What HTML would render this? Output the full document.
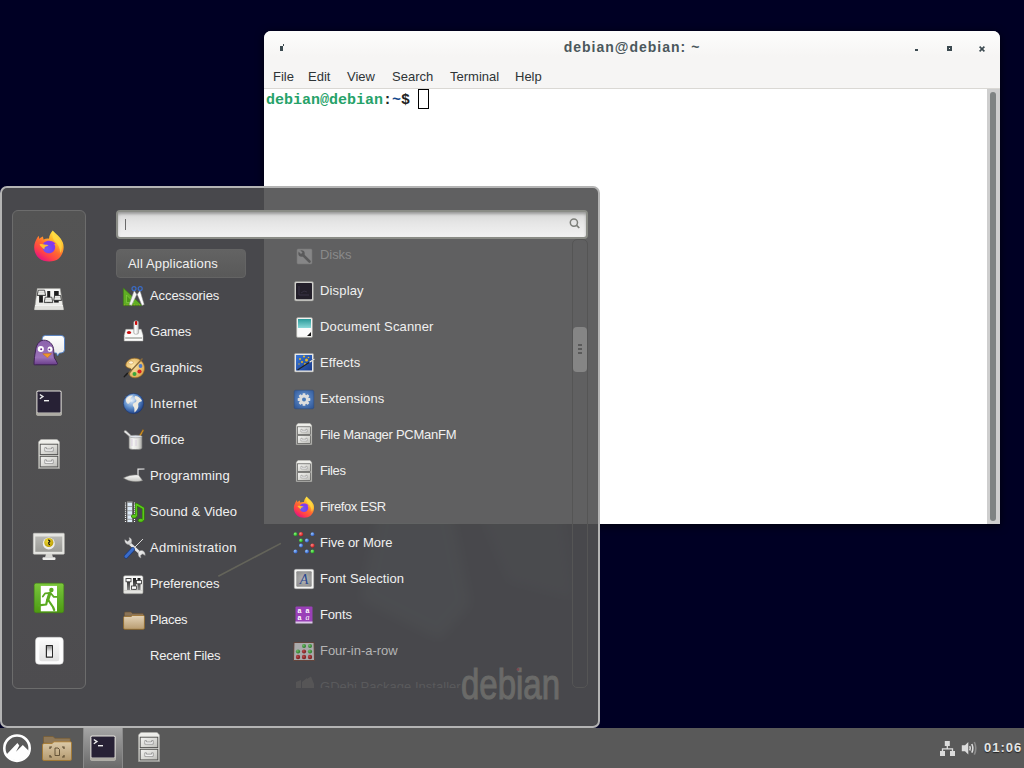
<!DOCTYPE html>
<html><head><meta charset="utf-8">
<style>
*{margin:0;padding:0;box-sizing:border-box}
html,body{width:1024px;height:768px;overflow:hidden;background:#000024;font-family:"Liberation Sans",sans-serif;position:relative}
.a{position:absolute}
svg.a{overflow:visible}
/* terminal */
#term{left:264px;top:31px;width:736px;height:493px;background:#fff;border-radius:7px 7px 0 0;overflow:hidden;box-shadow:0 2px 8px rgba(0,0,0,0.7)}
#tb{left:0;top:0;width:736px;height:58px;background:linear-gradient(#fdfdfc,#f6f5f4 45%,#f6f5f4);border-bottom:1px solid #dad8d4}
#ttitle{left:0;width:736px;top:8px;text-align:center;font-weight:bold;font-size:14px;letter-spacing:1px;color:#4b585c}
.mi{top:38px;font-size:13px;color:#2e3436}
#prompt{left:2px;top:60px;font-family:"Liberation Mono",monospace;font-weight:bold;font-size:15px;line-height:20px;white-space:pre}
#cur{left:154px;top:58px;width:11px;height:20px;border:1.5px solid #000}
#trough{left:723px;top:58px;width:13px;height:435px;background:#cecece}
#thumb{left:726px;top:61px;width:6px;height:429px;background:#7f8383;border-radius:3px}
/* menu */
#menu{left:0;top:186px;width:600px;height:542px;background:rgba(80,79,81,0.905);border:2px solid #b4b4b4;border-radius:7px}
#fav{left:12px;top:210px;width:74px;height:479px;background:linear-gradient(#545454,#4d4c4f);border:1px solid #6c6c6c;border-radius:6px}
#search{left:116px;top:210px;width:472px;height:29px;border:2px solid #8a8c86;border-radius:4px;background:linear-gradient(#c4c4c4,#dcdcdc 4px,#e6e6e6 45%,#f2f2f2);box-shadow:inset 0 2px 3px rgba(0,0,0,0.22)}
#allapps{left:116px;top:249px;width:130px;height:29px;background:linear-gradient(#636363,#595959);border:1px solid #646464;border-radius:4px}
.t{font-size:13px;color:#f0f0f0;white-space:nowrap}
#sbtrough{left:572px;top:239px;width:16px;height:449px;border:1px solid #555;border-radius:5px}
#sbthumb{left:573px;top:327px;width:14px;height:45px;background:#858585;border-radius:4px}
/* panel */
#panel{left:0;top:728px;width:1024px;height:40px;background:#595959}
#tbtn{left:83px;top:728px;width:40px;height:40px;background:linear-gradient(#a4a4a4,#6a6a6a);border-left:1px solid #8a8a8a;border-right:1px solid #8a8a8a}
#clock{left:984px;top:740px;font-size:13px;font-weight:bold;letter-spacing:1px;color:#e4e4e4;text-shadow:0 1px 1px #222}
</style></head><body>

<svg width="0" height="0" style="position:absolute">
<defs>
<linearGradient id="ffbody" x1="0.85" y1="0.05" x2="0.25" y2="0.95"><stop offset="0" stop-color="#fff44f"/><stop offset="0.3" stop-color="#ffb72c"/><stop offset="0.55" stop-color="#ff6a30"/><stop offset="0.8" stop-color="#ff3e4a"/><stop offset="1" stop-color="#e5157f"/></linearGradient>
<radialGradient id="ffpurp" cx="0.35" cy="0.65" r="0.8"><stop offset="0" stop-color="#6e5cf0"/><stop offset="0.6" stop-color="#7a3df0"/><stop offset="1" stop-color="#9a32e8"/></radialGradient>
<symbol id="ff" viewBox="0 0 32 32">
<path d="M19.8 0.6C22.5 4 27.5 6.8 29.8 12.5C31.6 17.5 30.5 24.5 25.5 28.8C21 32.5 11 32.6 6 28.3C1.3 24.2 0.2 17.5 2 12.6C2.9 10 4 7.8 5.7 5.7L6.4 9C7.4 7.8 8.6 7.1 9.9 6.6L10.6 9.6C12.3 8.7 14.2 8.4 16 8.7C16.2 5.5 17.8 2.8 19.8 0.6Z" fill="url(#ffbody)"/>
<path d="M19.5 2.5C21.5 6 26 8 28 13C29.5 17 28.8 21 27.2 23C27 18 25 14 22 11.5C20 9.8 18.8 6 19.5 2.5Z" fill="#ffe44a" opacity="0.6"/>
<path d="M9.5 17C9.5 13 12.5 10.8 16 10.8C18.5 10.8 20 11.5 21.2 12.5L22.5 13.5C22 14.2 21.3 14 21 14C22 15 22.2 16 22.2 17C22.2 20.6 19.5 23.3 15.9 23.3C12.3 23.3 9.5 20.6 9.5 17Z" fill="url(#ffpurp)"/>
<path d="M6.5 14.5C8 13.8 10 14.2 11.5 14.5C13 14.8 14.5 14.8 15.5 15.5C14.5 16 13 16.2 12 17C11.5 17.5 11.3 18.5 11.5 19.5C10 18.5 8.5 17 7.5 16Z" fill="#ffbd2e"/>
</symbol>
<linearGradient id="cabg" x1="0" y1="0" x2="0" y2="1"><stop offset="0" stop-color="#f2f2ee"/><stop offset="1" stop-color="#c6c6c2"/></linearGradient>
<linearGradient id="drwg" x1="0" y1="0" x2="1" y2="1"><stop offset="0" stop-color="#f4f4f2"/><stop offset="0.5" stop-color="#dcdcd8"/><stop offset="1" stop-color="#bdbdb9"/></linearGradient>
<symbol id="cab" viewBox="0 0 22 30">
<path d="M3 0.3H19L21.7 3V29.7H0.3V3Z" fill="url(#cabg)" stroke="#8c8c88" stroke-width="0.6"/>
<rect x="2.2" y="5.2" width="17.6" height="10.4" fill="url(#drwg)" stroke="#4c4c4a" stroke-width="0.9"/>
<rect x="2.2" y="17.3" width="17.6" height="10.6" fill="url(#drwg)" stroke="#4c4c4a" stroke-width="0.9"/>
<path d="M6.8 8.6H8.4V10H13.6V8.6H15.2V12.2H6.8Z" fill="#fbfbfb" stroke="#707070" stroke-width="0.6"/>
<path d="M6.8 20.8H8.4V22.2H13.6V20.8H15.2V24.4H6.8Z" fill="#fbfbfb" stroke="#707070" stroke-width="0.6"/>
</symbol>
<symbol id="trm" viewBox="0 0 26 26">
<rect x="0.4" y="0.4" width="25.2" height="25.2" rx="1.6" fill="#e9e7e1"/>
<rect x="0.4" y="22.6" width="25.2" height="3" rx="1" fill="#aeaca4"/>
<rect x="1.4" y="1.4" width="23.2" height="21.2" rx="0.8" fill="#272135"/>
<path d="M3.8 4.5L7 6.6L3.8 8.7" fill="none" stroke="#f0f0f0" stroke-width="1.3"/>
<rect x="8" y="10" width="5" height="1.4" fill="#f0f0f0"/>
</symbol>
</defs>
</svg>

<div id="term" class="a">
  <div id="tb" class="a"></div>
  <div id="ttitle" class="a">debian@debian: ~</div>
  <div class="a mi" style="left:9px">File</div>
  <div class="a mi" style="left:44px">Edit</div>
  <div class="a mi" style="left:83px">View</div>
  <div class="a mi" style="left:128px">Search</div>
  <div class="a mi" style="left:186px">Terminal</div>
  <div class="a mi" style="left:251px">Help</div>
  <div id="prompt" class="a"><span style="color:#26a269">debian@debian</span><span style="color:#222">:</span><span style="color:#12488b">~</span><span style="color:#222">$ </span></div>
  <div id="cur" class="a"></div>
  <div id="trough" class="a"></div>
  <div id="thumb" class="a"></div>
  <div class="a" style="left:16px;top:15px;width:3px;height:5px;background:#3c4a50"></div>
  <div class="a" style="left:19px;top:13px;width:1px;height:2px;background:#3c4a50"></div>
  <div class="a" style="left:651px;top:18px;width:3px;height:2px;background:#3c4a50"></div>
  <div class="a" style="left:683px;top:15px;width:5px;height:5px;border:2px solid #3c4a50"></div>
  <svg class="a" style="left:715px;top:15px" width="6" height="6" viewBox="0 0 6 6"><path d="M0.6 0.6L5.4 5.4M5.4 0.6L0.6 5.4" stroke="#3c4a50" stroke-width="1.6"/></svg>
</div>

<div id="menu" class="a"></div>
<svg class="a" style="left:0;top:186px" width="600" height="542" viewBox="0 186 600 542">
<defs><filter id="bl" x="-50%" y="-50%" width="200%" height="200%"><feGaussianBlur stdDeviation="6"/></filter><clipPath id="wc"><rect x="264" y="523" width="308" height="170"/></clipPath></defs>
<g clip-path="url(#wc)"><path d="M380 500L449.6 500L471 604L440 640L360 600Z" fill="#7a8a84" opacity="0.07" filter="url(#bl)"/>
<path d="M473 500L560 500L575 600L507.6 582Z" fill="#7a8a84" opacity="0.045" filter="url(#bl)"/></g>
<path d="M218.3 576.2L280.9 543.4" stroke="#64645a" stroke-width="1.6"/>
<text x="461" y="699" font-family="Liberation Sans" font-size="42" fill="#6a6a68" stroke="#6a6a68" stroke-width="1.1" transform="translate(461 0) scale(0.785 1) translate(-461 0)">debian</text>
<circle cx="518" cy="669.5" r="1.4" fill="#7a4a50"/>
</svg>
<div id="fav" class="a"></div>
<div id="search" class="a"></div>
<div class="a" style="left:125px;top:219px;width:1px;height:11px;background:#6a6a6a"></div>
<svg class="a" style="left:567px;top:216px" width="14" height="14" viewBox="0 0 14 14"><circle cx="6.9" cy="6.6" r="3.6" fill="none" stroke="#7d7f7a" stroke-width="1.5"/><path d="M9.6 9.3L12.3 12" stroke="#7d7f7a" stroke-width="1.7"/></svg>
<div id="allapps" class="a"></div>
<div class="a t" style="left:128px;top:256px;letter-spacing:0.16px;">All Applications</div>

<div class="a t" style="left:150px;top:288px;letter-spacing:-0.08px;">Accessories</div>
<div class="a t" style="left:150px;top:324px;letter-spacing:-0.14px;">Games</div>
<div class="a t" style="left:150px;top:360px;letter-spacing:0.03px;">Graphics</div>
<div class="a t" style="left:150px;top:396px;letter-spacing:0.41px;">Internet</div>
<div class="a t" style="left:150px;top:432px;letter-spacing:0.16px;">Office</div>
<div class="a t" style="left:150px;top:468px;letter-spacing:0.16px;">Programming</div>
<div class="a t" style="left:150px;top:504px;letter-spacing:0.05px;">Sound &amp; Video</div>
<div class="a t" style="left:150px;top:540px;letter-spacing:0.32px;">Administration</div>
<div class="a t" style="left:150px;top:576px;letter-spacing:-0.06px;">Preferences</div>
<div class="a t" style="left:150px;top:612px;letter-spacing:-0.29px;">Places</div>
<div class="a t" style="left:150px;top:648px;letter-spacing:-0.15px;">Recent Files</div>

<div class="a t" style="left:320px;top:247px;color:#8a8a8a;letter-spacing:-0.06px;">Disks</div>
<div class="a t" style="left:320px;top:283px;letter-spacing:0.16px;">Display</div>
<div class="a t" style="left:320px;top:319px;letter-spacing:0.14px;">Document Scanner</div>
<div class="a t" style="left:320px;top:355px;letter-spacing:0.11px;">Effects</div>
<div class="a t" style="left:320px;top:391px;letter-spacing:0.07px;">Extensions</div>
<div class="a t" style="left:320px;top:427px;letter-spacing:-0.27px;">File Manager PCManFM</div>
<div class="a t" style="left:320px;top:463px;letter-spacing:-0.38px;">Files</div>
<div class="a t" style="left:320px;top:499px;letter-spacing:-0.40px;">Firefox ESR</div>
<div class="a t" style="left:320px;top:535px;letter-spacing:-0.05px;">Five or More</div>
<div class="a t" style="left:320px;top:571px;letter-spacing:0.07px;">Font Selection</div>
<div class="a t" style="left:320px;top:607px;letter-spacing:-0.15px;">Fonts</div>
<div class="a t" style="left:320px;top:643px;color:#b4b4b4;letter-spacing:-0.04px;">Four-in-a-row</div>
<div class="a" style="left:264px;top:676px;width:300px;height:12px;overflow:hidden"><div class="a t" style="left:56px;top:3px;color:#5a5a5c;letter-spacing:0.02px;">GDebi Package Installer</div></div>

<div id="sbtrough" class="a"></div>
<div id="sbthumb" class="a"></div>
<div class="a" style="left:578px;top:344px;width:4px;height:2px;background:#5a5a5a"></div>
<div class="a" style="left:578px;top:348px;width:4px;height:2px;background:#5a5a5a"></div>
<div class="a" style="left:578px;top:352px;width:4px;height:2px;background:#5a5a5a"></div>

<svg class="a" style="left:33px;top:230px" width="32" height="32"><use href="#ff"/></svg>
<svg class="a" style="left:34px;top:288px" width="30" height="23" viewBox="0 0 30 23">
<defs><linearGradient id="sbase" x1="0" y1="0" x2="0" y2="1"><stop offset="0" stop-color="#fafaf8"/><stop offset="1" stop-color="#e8e8e4"/></linearGradient>
<linearGradient id="knob" x1="0" y1="0" x2="0" y2="1"><stop offset="0" stop-color="#fcfcfa"/><stop offset="0.45" stop-color="#d8d8d4"/><stop offset="0.55" stop-color="#f2f2f0"/><stop offset="1" stop-color="#b4b6b0"/></linearGradient></defs>
<path d="M3.3 0.6H26.2L29.5 21.7H0.5Z" fill="url(#sbase)" stroke="#9a9a96" stroke-width="0.6"/>
<path d="M1.1 17.2H28.9L29.5 21.7H0.5Z" fill="#e0e0dc"/>
<rect x="1" y="17.2" width="28" height="0.6" fill="#fcfcfc"/>
<rect x="5.1" y="3" width="3.8" height="11.6" fill="#1e1e1e"/>
<rect x="13.2" y="3" width="3" height="11.6" fill="#1e1e1e"/>
<rect x="20.1" y="3" width="4.6" height="11.6" fill="#1e1e1e"/>
<path d="M4.2 2.2H10.6L11.6 7.5H3.2Z" fill="url(#knob)" stroke="#2a2a2a" stroke-width="0.8"/>
<path d="M11.2 9.2H17.8L18.8 14.6H10.2Z" fill="url(#knob)" stroke="#2a2a2a" stroke-width="0.8"/>
<path d="M20.6 7.5H26.6L27.5 12.5H19.7Z" fill="url(#knob)" stroke="#2a2a2a" stroke-width="0.8"/>
</svg>
<svg class="a" style="left:33px;top:334px" width="32" height="32" viewBox="0 0 32 32">
<defs><linearGradient id="pbird" x1="0" y1="0" x2="0" y2="1"><stop offset="0" stop-color="#8c62ad"/><stop offset="0.7" stop-color="#9a72b8"/><stop offset="1" stop-color="#6a3d8a"/></linearGradient></defs>
<defs><linearGradient id="bub" x1="0" y1="0" x2="0" y2="1"><stop offset="0" stop-color="#ffffff"/><stop offset="1" stop-color="#e8e8e8"/></linearGradient></defs><path d="M12.5 1.4H28Q31.5 1.4 31.5 4.8V15.6Q31.5 19 28 19H26.5L24.5 22L23.5 19H12.5Q9.2 19 9.2 15.6V4.8Q9.2 1.4 12.5 1.4Z" fill="url(#bub)" stroke="#4d7dc4" stroke-width="0.9"/>
<path d="M1 30.5C1 26 1.8 21 2.5 17C3 11 6 6.5 10.5 6.2C15.5 6 19.5 9.5 20.5 14.5C21 18 20.8 22 21.5 24C22.5 26 24 27.5 24.5 29.5C24.5 30.5 23.5 30.8 22 30.8H2.5C1.5 30.8 1 30.8 1 30.5Z" fill="url(#pbird)" stroke="#3a1d50" stroke-width="0.9"/>
<ellipse cx="7.8" cy="15.1" rx="3.1" ry="3" fill="#fff"/>
<circle cx="8.2" cy="15.3" r="1" fill="#6a2d8a"/>
<ellipse cx="17" cy="15.2" rx="2.4" ry="2.6" fill="#fff"/>
<circle cx="16.4" cy="15.4" r="0.9" fill="#6a2d8a"/>
<path d="M9.8 19.8L18.5 19.6L14.5 23.8Z" fill="#f19a2a" stroke="#c86a10" stroke-width="0.5"/>
</svg>
<svg class="a" style="left:36px;top:390px" width="26" height="26"><use href="#trm"/></svg>
<svg class="a" style="left:38px;top:439px" width="22" height="30"><use href="#cab"/></svg>
<svg class="a" style="left:33px;top:533px" width="32" height="28" viewBox="0 0 32 28">
<defs><linearGradient id="scr" x1="0" y1="0" x2="0" y2="1"><stop offset="0" stop-color="#b8b8b4"/><stop offset="1" stop-color="#9a9a96"/></linearGradient>
<radialGradient id="gold" cx="0.4" cy="0.35" r="0.7"><stop offset="0" stop-color="#f2dc3a"/><stop offset="1" stop-color="#b89a00"/></radialGradient></defs>
<rect x="0.3" y="0.2" width="31" height="21" rx="0.8" fill="#e6e6e2" stroke="#c8c8c4" stroke-width="0.5"/>
<rect x="2.3" y="3.5" width="27" height="15.3" fill="url(#scr)"/>
<path d="M13 21H19L20 24.5H12Z" fill="#d6d6d2"/>
<rect x="9.5" y="24.2" width="13" height="2.8" rx="1" fill="#ececea"/>
<circle cx="15.8" cy="10.6" r="6" fill="#f4f4f2" opacity="0.9"/>
<circle cx="15.8" cy="9.5" r="4.6" fill="url(#gold)"/>
<path d="M15 7.2Q17 7 16.8 8.6Q15.2 9.3 15.8 10.8Q16.5 11.5 17 11.6" fill="none" stroke="#111" stroke-width="1.2"/>
</svg>
<svg class="a" style="left:34px;top:583px" width="30" height="30" viewBox="0 0 30 30">
<defs><linearGradient id="grn" x1="0" y1="0" x2="0" y2="1"><stop offset="0" stop-color="#7cc83a"/><stop offset="0.5" stop-color="#62b02a"/><stop offset="1" stop-color="#4e9a10"/></linearGradient></defs>
<rect x="0.2" y="0.2" width="29.6" height="29.6" rx="2" fill="url(#grn)" stroke="#3f8a0c" stroke-width="0.5"/>
<rect x="6.8" y="2.9" width="16.2" height="25.4" fill="#fff"/>
<circle cx="17.4" cy="7" r="2.2" fill="#5aaa20"/>
<path d="M15.8 10.3L13.6 17.3" stroke="#5aaa20" stroke-width="3.2" stroke-linecap="round"/>
<path d="M14.5 10.2L11.2 10.3L8.8 13.5" fill="none" stroke="#5aaa20" stroke-width="1.8" stroke-linecap="round" stroke-linejoin="round"/>
<path d="M17 10.5L19.8 13.8H23" fill="none" stroke="#5aaa20" stroke-width="1.8" stroke-linecap="round" stroke-linejoin="round"/>
<path d="M13.2 17L12.2 21.5L4.8 22.3" fill="none" stroke="#5aaa20" stroke-width="2.2" stroke-linecap="round" stroke-linejoin="round"/>
<path d="M14.2 17L19 24L20.2 27" fill="none" stroke="#5aaa20" stroke-width="2.2" stroke-linecap="round" stroke-linejoin="round"/>
</svg>
<svg class="a" style="left:35px;top:637px" width="29" height="28" viewBox="0 0 29 28">
<defs><linearGradient id="pw" x1="0" y1="0" x2="0" y2="1"><stop offset="0" stop-color="#fafafa"/><stop offset="1" stop-color="#e2e2e2"/></linearGradient>
<linearGradient id="sw" x1="0" y1="0" x2="0" y2="1"><stop offset="0" stop-color="#8a8a8a"/><stop offset="0.5" stop-color="#e8e8e8"/><stop offset="1" stop-color="#ffffff"/></linearGradient></defs>
<rect x="0.5" y="0.3" width="27.8" height="27" rx="3.5" fill="#fdfdfd" stroke="#d0d0d0" stroke-width="0.5"/>
<rect x="4.3" y="3.3" width="20" height="21" rx="2.5" fill="url(#pw)"/>
<rect x="10.8" y="7.9" width="7.2" height="12.9" rx="0.5" fill="#2a2a2a"/>
<rect x="12" y="9" width="5" height="10.5" fill="url(#sw)"/>
</svg>
<svg class="a" style="left:123px;top:285px" width="22" height="22" viewBox="0 0 22 22">
<path d="M0.3 3L19 20.6H0.3Z" fill="#5fae24" stroke="#3a7a10" stroke-width="0.6"/>
<path d="M3.5 10L11 17.5H3.5Z" fill="#4e9a1a" stroke="#8fd24a" stroke-width="0.6"/>
<path d="M1 19.8H18" stroke="#c8a020" stroke-width="0.6" stroke-dasharray="1 1.5"/>
<path d="M11.2 5.5L13.8 9.5L8.5 20.5L6.2 19.5Z" fill="#f4f4f4" stroke="#8a8a8a" stroke-width="0.5"/>
<path d="M17 5.5L14.2 9.5L19 20.5L21.2 19.5Z" fill="#ffffff" stroke="#8a8a8a" stroke-width="0.5"/>
<circle cx="11" cy="3.6" r="2" fill="none" stroke="#3a6cc8" stroke-width="1.2"/>
<circle cx="17.2" cy="3.6" r="2" fill="none" stroke="#3a6cc8" stroke-width="1.2"/>
</svg>
<svg class="a" style="left:123px;top:320px" width="22" height="22" viewBox="0 0 22 22">
<defs><linearGradient id="joyb" x1="0" y1="0" x2="0" y2="1"><stop offset="0" stop-color="#f4f6f4"/><stop offset="1" stop-color="#ffffff"/></linearGradient>
<linearGradient id="stk" x1="0" y1="0" x2="1" y2="0"><stop offset="0" stop-color="#d8d8d8"/><stop offset="0.4" stop-color="#ffffff"/><stop offset="1" stop-color="#c4c4c4"/></linearGradient></defs>
<path d="M2.8 9.3H18.2L20 15.2V21H1.2V15.2Z" fill="url(#joyb)" stroke="#a8a8a4" stroke-width="0.5"/>
<rect x="2.2" y="17" width="16.8" height="2" fill="#bcbeba"/>
<ellipse cx="6" cy="12.4" rx="2.1" ry="1.5" fill="#c80a0a"/>
<rect x="10.7" y="0.8" width="4.9" height="13.4" rx="1.8" fill="url(#stk)" stroke="#8a8a86" stroke-width="0.5"/>
<rect x="12" y="1" width="2.2" height="4" rx="0.8" fill="#cc0a0a"/>
</svg>
<svg class="a" style="left:123px;top:357px" width="22" height="22" viewBox="0 0 22 22">
<defs><radialGradient id="pal" cx="0.4" cy="0.4" r="0.7"><stop offset="0" stop-color="#fde6a8"/><stop offset="1" stop-color="#d8a44a"/></radialGradient></defs>
<path d="M11.5 1.2C17.5 1.2 21.5 6 21.5 11C21.5 17 17 20.8 12 20.8C8.5 20.8 6.5 19 6.5 17C6.5 15 9 14.5 8.5 12.5C8 10.5 3 11.5 2.8 8.5C2.6 4.5 7 1.2 11.5 1.2Z" fill="url(#pal)" stroke="#9a6a20" stroke-width="0.7"/>
<ellipse cx="8" cy="5.5" rx="2.4" ry="1.6" fill="#fff4d8" stroke="#b88030" stroke-width="0.4"/>
<circle cx="17.5" cy="9" r="1.9" fill="#4a78c8"/>
<circle cx="16.5" cy="14.5" r="2.1" fill="#d82020"/>
<circle cx="11.5" cy="17" r="2" fill="#3aa63a"/>
<path d="M19.5 1.5L5 17" stroke="#8a6a3a" stroke-width="1.3"/>
<path d="M6 15.5L3.5 18.5L1 20.8L0.5 19.5L4 15.8Z" fill="#1a1a1a"/>
</svg>
<svg class="a" style="left:123px;top:393px" width="22" height="22" viewBox="0 0 22 22">
<defs><radialGradient id="glb" cx="0.4" cy="0.35" r="0.7"><stop offset="0" stop-color="#d8e8f8"/><stop offset="0.55" stop-color="#5a8ac8"/><stop offset="1" stop-color="#1a3a80"/></radialGradient></defs>
<circle cx="10.5" cy="10.5" r="10.1" fill="url(#glb)" stroke="#1a3470" stroke-width="0.6"/>
<path d="M3 6C5 3 8 2 10 2.5C9 4 7 4.5 7.5 6.5C8 8.5 6.5 10.5 5 11C3.5 10 2.5 8 3 6Z" fill="#eeeae0"/>
<path d="M12 3C15 3 18 5 19 8C18 9 16.5 8.5 15.5 10C14.5 11.5 16 13 15 15C14 17 12.5 18.5 11.5 19.5C11 17 12 15 10.5 13.5C9 12 10 10 12 9.5C13.5 9 14 7 12.5 6C11.5 5 11.5 4 12 3Z" fill="#eeeae0"/>
<ellipse cx="8" cy="6" rx="5" ry="3" fill="#fff" opacity="0.25"/>
</svg>
<svg class="a" style="left:123px;top:429px" width="22" height="22" viewBox="0 0 22 22">
<defs><linearGradient id="cup" x1="0" y1="0" x2="1" y2="0"><stop offset="0" stop-color="#c8c8c4"/><stop offset="0.3" stop-color="#f6f6f4"/><stop offset="0.7" stop-color="#e0e0dc"/><stop offset="1" stop-color="#a8a8a4"/></linearGradient></defs>
<path d="M1.2 3.2C0.5 2 1.8 0.8 3 1.5L10.5 8.5L9 10Z" fill="#e8e8e8" stroke="#666" stroke-width="0.7"/>
<path d="M19.8 0.5L20.8 1.2L15.5 11.5L13.5 11Z" fill="#d89a2a" stroke="#8a5a10" stroke-width="0.5"/>
<path d="M6 7.5H19V19Q19 20.5 12.5 20.5Q6 20.5 6 19Z" fill="url(#cup)" stroke="#777" stroke-width="0.7"/>
<ellipse cx="12.5" cy="7.5" rx="6.5" ry="1.3" fill="#dfe4ea" stroke="#888" stroke-width="0.5"/>
<path d="M9 10V17M13 11V17" stroke="#c8b0d8" stroke-width="0.8" opacity="0.6"/>
</svg>
<svg class="a" style="left:123px;top:465px" width="22" height="22" viewBox="0 0 22 22">
<defs><linearGradient id="trw" x1="0" y1="0" x2="0" y2="1"><stop offset="0" stop-color="#fafafa"/><stop offset="1" stop-color="#c4c4c0"/></linearGradient></defs>
<path d="M15 10.5V4.2L21.5 4" fill="none" stroke="#e8e8e8" stroke-width="1.2"/>
<path d="M0.5 13C5 10.5 10 9.5 15.5 10L19.5 15.5C14 17.5 6 16.8 0.5 13Z" fill="url(#trw)" stroke="#8a8a86" stroke-width="0.5"/>
</svg>
<svg class="a" style="left:123px;top:501px" width="22" height="22" viewBox="0 0 22 22">
<rect x="1" y="0.3" width="12" height="21" fill="#4a4a4c"/>
<rect x="4" y="0.3" width="5.6" height="21" fill="#8a8a8a"/>
<g fill="#dceaf8"><rect x="4.6" y="1.8" width="4.4" height="3.4"/><rect x="4.6" y="6" width="4.4" height="3.4"/><rect x="4.6" y="10.2" width="4.4" height="3.4"/><rect x="4.6" y="14.4" width="4.4" height="3.4"/><rect x="4.6" y="18.6" width="4.4" height="2.4"/></g>
<path d="M2.5 1.5V21M11.5 1.5V21" stroke="#f4f4f4" stroke-width="1.1" stroke-dasharray="1.1 0.95"/>
<path d="M13.3 15.2V3.2L20.3 7.3V19.3" fill="none" stroke="#2a7a00" stroke-width="2.6" stroke-linejoin="round"/>
<ellipse cx="11" cy="15.3" rx="2.9" ry="2" fill="#2a7a00"/>
<ellipse cx="17.7" cy="19.3" rx="2.9" ry="2" fill="#2a7a00"/>
<path d="M13.3 15.2V3.2L20.3 7.3V19.3" fill="none" stroke="#5ac81a" stroke-width="1.6" stroke-linejoin="round"/>
<ellipse cx="11" cy="15.3" rx="2.3" ry="1.5" fill="#5ac81a"/>
<ellipse cx="17.7" cy="19.3" rx="2.3" ry="1.5" fill="#5ac81a"/>
</svg>
<svg class="a" style="left:124px;top:537px" width="22" height="22" viewBox="0 0 22 22">
<defs><linearGradient id="wr" x1="0" y1="0" x2="1" y2="1"><stop offset="0" stop-color="#f8f8f8"/><stop offset="1" stop-color="#c8c8c8"/></linearGradient></defs>
<path d="M4 5L17 17" stroke="#e4e4e4" stroke-width="2.8"/>
<path d="M0.8 2.5C0.5 5 2 7.5 4.5 7.5C6.5 7.5 7.8 6 7.8 4C7.8 2 6.5 0.8 5 0.5L5.5 3L3.5 4.5Z" fill="url(#wr)" stroke="#8a8a8a" stroke-width="0.4"/>
<path d="M21.2 18.5C21.5 16 20 13.5 17.5 13.5C15.5 13.5 14.2 15 14.2 17C14.2 19 15.5 20.8 17 21L16.5 18.5L18.5 17Z" fill="url(#wr)" stroke="#8a8a8a" stroke-width="0.4"/>
<path d="M19 2L8.8 12.2" stroke="#d8d8d8" stroke-width="1"/>
<path d="M8.8 12.2L2 19.5" stroke="#1a3a80" stroke-width="4.2" stroke-linecap="round"/>
<path d="M8.8 12.2L2 19.5" stroke="#3a6cc8" stroke-width="3" stroke-linecap="round"/>
</svg>
<svg class="a" style="left:123px;top:575px" width="21" height="20" viewBox="0 0 21 20">
<defs><linearGradient id="prf" x1="0" y1="0" x2="0" y2="1"><stop offset="0" stop-color="#fdfdfd"/><stop offset="1" stop-color="#e2e2de"/></linearGradient>
<linearGradient id="trk" x1="0" y1="0" x2="0" y2="1"><stop offset="0" stop-color="#1a1a1a"/><stop offset="1" stop-color="#8a8a8a"/></linearGradient></defs>
<rect x="0.5" y="0.7" width="19.5" height="18" rx="1.5" fill="url(#prf)" stroke="#9a9a96" stroke-width="0.6"/>
<rect x="1" y="15" width="18.5" height="0.6" fill="#c8c8c4"/>
<rect x="4" y="3" width="3" height="12" fill="url(#trk)"/>
<rect x="10" y="3" width="3" height="12" fill="url(#trk)"/>
<rect x="14.5" y="3" width="3" height="12" fill="url(#trk)"/>
<rect x="3" y="3.5" width="5" height="3.3" fill="#fafafa" stroke="#333" stroke-width="0.8"/>
<rect x="8.5" y="11" width="5" height="3.3" fill="#fafafa" stroke="#333" stroke-width="0.8"/>
<rect x="13.5" y="5.5" width="5" height="3.3" fill="#fafafa" stroke="#333" stroke-width="0.8"/>
</svg>
<svg class="a" style="left:123px;top:611px" width="22" height="19" viewBox="0 0 22 19">
<defs><linearGradient id="fld" x1="0" y1="0" x2="0" y2="1"><stop offset="0" stop-color="#e4d4b8"/><stop offset="1" stop-color="#b89c70"/></linearGradient></defs>
<path d="M1.5 5V2Q1.5 1 2.5 1H8L9.5 2.5H19.5Q20.5 2.5 20.5 3.5V6Z" fill="#8a7458" stroke="#6a5030" stroke-width="0.6"/>
<path d="M0.6 6.5Q0.6 5.5 1.6 5.5H8L9.5 4.5H20.5Q21.4 4.5 21.4 5.5V17Q21.4 18.3 20.2 18.3H1.8Q0.6 18.3 0.6 17Z" fill="url(#fld)" stroke="#9a6a20" stroke-width="0.7"/>
</svg>
<svg class="a" style="left:296px;top:248px" width="17" height="17" viewBox="0 0 17 17" opacity="0.32">
<rect x="1" y="1" width="15" height="15" rx="1" fill="#d8d8d8" stroke="#a0a0a0" stroke-width="0.6"/>
<path d="M6 6L13.5 13.5" stroke="#505050" stroke-width="2.6" stroke-linecap="round"/>
<circle cx="5.5" cy="5.5" r="3.2" fill="#505050"/>
<path d="M2.5 3.5L5 6L6.5 4.5L4 2Z" fill="#d8d8d8"/>
</svg>
<svg class="a" style="left:294px;top:281px" width="20" height="21" viewBox="0 0 20 21">
<rect x="0.5" y="0.5" width="19" height="19.5" rx="1.5" fill="#cfcfcb" stroke="#8a8a86" stroke-width="0.5"/>
<rect x="2" y="2" width="16" height="16.3" rx="0.8" fill="#231f2a"/>
<path d="M5 5V14H15" fill="none" stroke="#3a3446" stroke-width="1"/>
<path d="M7 12L10 10L13 11" fill="none" stroke="#352f40" stroke-width="1"/>
</svg>
<svg class="a" style="left:296px;top:317px" width="17" height="21" viewBox="0 0 17 21">
<defs><linearGradient id="teal" x1="0" y1="0" x2="0" y2="1"><stop offset="0" stop-color="#2a9a9a"/><stop offset="1" stop-color="#8ad8d8"/></linearGradient></defs>
<rect x="0.5" y="0.5" width="16" height="20" rx="1.5" fill="#f2f2f0" stroke="#9a9a96" stroke-width="0.6"/>
<rect x="2" y="2" width="13" height="9" fill="url(#teal)"/>
<rect x="2" y="11" width="13" height="8" fill="#fafafa"/>
<path d="M15 15V19H11Z" fill="#111"/>
</svg>
<svg class="a" style="left:294px;top:353px" width="21" height="20" viewBox="0 0 21 20">
<defs><linearGradient id="eff" x1="0" y1="0" x2="1" y2="1"><stop offset="0" stop-color="#3a78d8"/><stop offset="1" stop-color="#1a3a8a"/></linearGradient></defs>
<rect x="0.5" y="0.5" width="19" height="18.5" rx="1" fill="#e8e8e6" stroke="#9a9a96" stroke-width="0.5"/>
<rect x="2" y="2" width="16" height="15.5" fill="url(#eff)"/>
<g fill="#e8b820"><circle cx="6" cy="6" r="1"/><circle cx="10" cy="3.5" r="1.1"/><circle cx="12.5" cy="7" r="1.5"/><circle cx="8" cy="9" r="1"/><circle cx="14.5" cy="4.5" r="0.8"/><circle cx="5" cy="11" r="0.7"/><circle cx="11" cy="11" r="0.9"/></g>
<path d="M3.5 17L20.5 6" stroke="#222" stroke-width="1.2"/>
<path d="M15.5 9.2L20.5 6" stroke="#f0f0f0" stroke-width="1.2"/>
</svg>
<svg class="a" style="left:294px;top:390px" width="20" height="19" viewBox="0 0 20 19">
<defs><radialGradient id="ext" cx="0.5" cy="0.45" r="0.75"><stop offset="0" stop-color="#6a9ad8"/><stop offset="1" stop-color="#2a5090"/></radialGradient></defs>
<rect x="0.2" y="0.2" width="19.6" height="18.6" rx="1.5" fill="url(#ext)" stroke="#23467e" stroke-width="0.4"/>
<g transform="translate(10 9.5)" fill="#dedede">
<circle r="4.8"/>
<g><rect x="-1.4" y="-6.3" width="2.8" height="2.5" rx="0.6"/><rect x="-1.4" y="3.8" width="2.8" height="2.5" rx="0.6"/><rect x="-6.3" y="-1.4" width="2.5" height="2.8" rx="0.6"/><rect x="3.8" y="-1.4" width="2.5" height="2.8" rx="0.6"/></g>
<g transform="rotate(45)"><rect x="-1.4" y="-6.3" width="2.8" height="2.5" rx="0.6"/><rect x="-1.4" y="3.8" width="2.8" height="2.5" rx="0.6"/><rect x="-6.3" y="-1.4" width="2.5" height="2.8" rx="0.6"/><rect x="3.8" y="-1.4" width="2.5" height="2.8" rx="0.6"/></g>
<circle r="2" fill="#4a7ab8"/>
</g>
</svg>
<svg class="a" style="left:295px;top:423px" width="18" height="22"><use href="#cab"/></svg>
<svg class="a" style="left:295px;top:460px" width="18" height="22"><use href="#cab"/></svg>
<svg class="a" style="left:293px;top:496px" width="22" height="22"><use href="#ff"/></svg>
<svg class="a" style="left:293px;top:532px" width="22" height="22" viewBox="0 0 22 22">
<defs><radialGradient id="dg" cx="0.35" cy="0.35" r="0.7"><stop offset="0" stop-color="#8aff7a"/><stop offset="1" stop-color="#1a9a1a"/></radialGradient>
<radialGradient id="dr" cx="0.35" cy="0.35" r="0.7"><stop offset="0" stop-color="#ff8a8a"/><stop offset="1" stop-color="#c81010"/></radialGradient>
<radialGradient id="db" cx="0.35" cy="0.35" r="0.7"><stop offset="0" stop-color="#9ac8ff"/><stop offset="1" stop-color="#2a5ac8"/></radialGradient></defs>
<circle cx="2.5" cy="2.2" r="1.9" fill="url(#dg)"/><circle cx="8" cy="2.2" r="2.1" fill="url(#dr)"/><circle cx="19.5" cy="2.2" r="1.9" fill="url(#db)"/>
<circle cx="8" cy="8.4" r="1.9" fill="url(#dg)"/><circle cx="13.9" cy="8.4" r="2" fill="url(#db)"/>
<circle cx="8" cy="13.6" r="2" fill="url(#db)"/><circle cx="19.5" cy="13.6" r="2.1" fill="url(#dr)"/>
<circle cx="2.5" cy="19.4" r="2" fill="url(#db)"/><circle cx="13.9" cy="19.4" r="2" fill="url(#db)"/><circle cx="19.5" cy="19.4" r="1.9" fill="url(#dg)"/>
</svg>
<svg class="a" style="left:294px;top:569px" width="20" height="20" viewBox="0 0 20 20">
<defs><radialGradient id="fsel" cx="0.5" cy="0.5" r="0.7"><stop offset="0" stop-color="#b8b8b8"/><stop offset="1" stop-color="#888"/></radialGradient></defs>
<rect x="0.3" y="0.3" width="19.4" height="19.4" rx="1.5" fill="#f4f4f2" stroke="#aaa" stroke-width="0.5"/>
<rect x="2.3" y="2.3" width="15.4" height="15.4" rx="1" fill="url(#fsel)"/>
<text x="10" y="15" text-anchor="middle" font-family="Liberation Serif" font-style="italic" font-size="14" fill="#2a4890">A</text>
</svg>
<svg class="a" style="left:295px;top:606px" width="18" height="18" viewBox="0 0 18 18">
<rect x="0.5" y="0.5" width="17" height="16" rx="1" fill="#9a40b8"/>
<rect x="0.5" y="15.5" width="17" height="2" fill="#dcc8e8"/>
<text x="4.5" y="7" text-anchor="middle" font-family="Liberation Sans" font-weight="bold" font-size="7" fill="#fff">a</text>
<text x="12.5" y="7" text-anchor="middle" font-family="Liberation Sans" font-weight="bold" font-size="7" fill="#fff">a</text>
<text x="4.5" y="14" text-anchor="middle" font-family="Liberation Sans" font-weight="bold" font-size="7" fill="#fff">a</text>
<text x="12.5" y="14" text-anchor="middle" font-family="Liberation Serif" font-style="italic" font-size="8" fill="#fff">a</text>
</svg>
<svg class="a" style="left:293px;top:642px" width="22" height="19" viewBox="0 0 22 19" opacity="0.7">
<defs><radialGradient id="r4" cx="0.35" cy="0.35" r="0.7"><stop offset="0" stop-color="#e84a4a"/><stop offset="1" stop-color="#8a0a0a"/></radialGradient>
<radialGradient id="g4" cx="0.35" cy="0.35" r="0.7"><stop offset="0" stop-color="#7ae86a"/><stop offset="1" stop-color="#1a8a1a"/></radialGradient></defs>
<path d="M1 0.5H21L21.5 18.5H0.5Z" fill="#d4d4d4" stroke="#6a3a2a" stroke-width="0.9"/>
<circle cx="11" cy="4" r="2" fill="url(#g4)"/><circle cx="17" cy="4" r="2" fill="url(#g4)"/>
<circle cx="5" cy="9.5" r="2.1" fill="url(#g4)"/><circle cx="11" cy="9.5" r="2.1" fill="url(#r4)"/><circle cx="17" cy="9.5" r="2.1" fill="url(#g4)"/>
<circle cx="5" cy="15" r="2.2" fill="url(#r4)"/><circle cx="11" cy="15" r="2.2" fill="url(#r4)"/><circle cx="17" cy="15" r="2.2" fill="url(#r4)"/>
</svg>
<div class="a" style="left:293px;top:674px;width:24px;height:14px;overflow:hidden;opacity:0.15">
<svg class="a" style="left:2px;top:2px" width="20" height="14" viewBox="0 0 20 14"><path d="M1 14V6L6 4V14ZM7 14V6L12 2V14ZM12 3L16 0.5L19 8V14H12Z" fill="#a8a090"/></svg>
</div>

<div id="panel" class="a"></div>
<div id="tbtn" class="a"></div>
<svg class="a" style="left:3px;top:733px" width="29" height="29" viewBox="0 0 29 29">
<defs><clipPath id="cc"><circle cx="14" cy="15.2" r="12"/></clipPath></defs>
<circle cx="14" cy="15.2" r="12.7" fill="none" stroke="#fff" stroke-width="2.6"/>
<path clip-path="url(#cc)" d="M4 21L14.4 10.1L16.3 12.6L13 18.8L19.8 12L26 18L28 29L0 29Z" fill="#fff"/>
</svg>
<svg class="a" style="left:42px;top:736px" width="30" height="25" viewBox="0 0 30 25">
<defs><linearGradient id="pfld" x1="0" y1="0" x2="0" y2="1"><stop offset="0" stop-color="#dccaa8"/><stop offset="1" stop-color="#b49a70"/></linearGradient></defs>
<path d="M1.5 7V1.3Q1.5 0.5 2.3 0.5H11L13 2.3H27.5Q28.3 2.3 28.3 3.1V9Z" fill="#8e7858" stroke="#7a5a2a" stroke-width="0.6"/>
<path d="M0.5 9Q0.5 7.5 2 7.5H10L12 5.8H28.5Q29.5 5.8 29.5 7V23Q29.5 24.5 28 24.5H2Q0.5 24.5 0.5 23Z" fill="url(#pfld)" stroke="#a8782a" stroke-width="0.8"/>
<g stroke="#5a4a30" stroke-width="1.2" fill="none"><path d="M8 13V11H10M20 11H22V13M22 19V21H20M10 21H8V19"/></g>
<path d="M13 12H16L17.5 13.5V19.5H13Z" fill="none" stroke="#5a4a30" stroke-width="0.9"/>
</svg>
<svg class="a" style="left:90px;top:735px" width="26" height="26"><use href="#trm"/></svg>
<svg class="a" style="left:138px;top:732px" width="22" height="30"><use href="#cab"/></svg>
<svg class="a" style="left:939px;top:740px" width="17" height="17" viewBox="0 0 17 17">
<g fill="#dcdcdc"><rect x="5.8" y="1" width="5" height="5"/><rect x="1" y="11" width="5" height="5"/><rect x="11" y="11" width="5" height="5"/></g>
<path d="M8.3 6V9M3.5 11V8.8H13.5V11" fill="none" stroke="#dcdcdc" stroke-width="1.3"/>
</svg>
<svg class="a" style="left:961px;top:741px" width="18" height="15" viewBox="0 0 18 15">
<path d="M0.8 4.2H4L7.3 0.9V13.6L4 10.3H0.8Z" fill="#dcdcdc"/>
<path d="M8.7 5.2Q9.9 7.3 8.7 9.5" fill="none" stroke="#dcdcdc" stroke-width="1.6"/>
<path d="M10.8 3Q12.9 7.3 10.8 11.6" fill="none" stroke="#dcdcdc" stroke-width="1.6"/>
<path d="M13.3 1Q16.3 7.3 13.3 13.7" fill="none" stroke="#8a8a8a" stroke-width="1.6"/>
</svg>
<div id="clock" class="a">01:06</div>

</body></html>
